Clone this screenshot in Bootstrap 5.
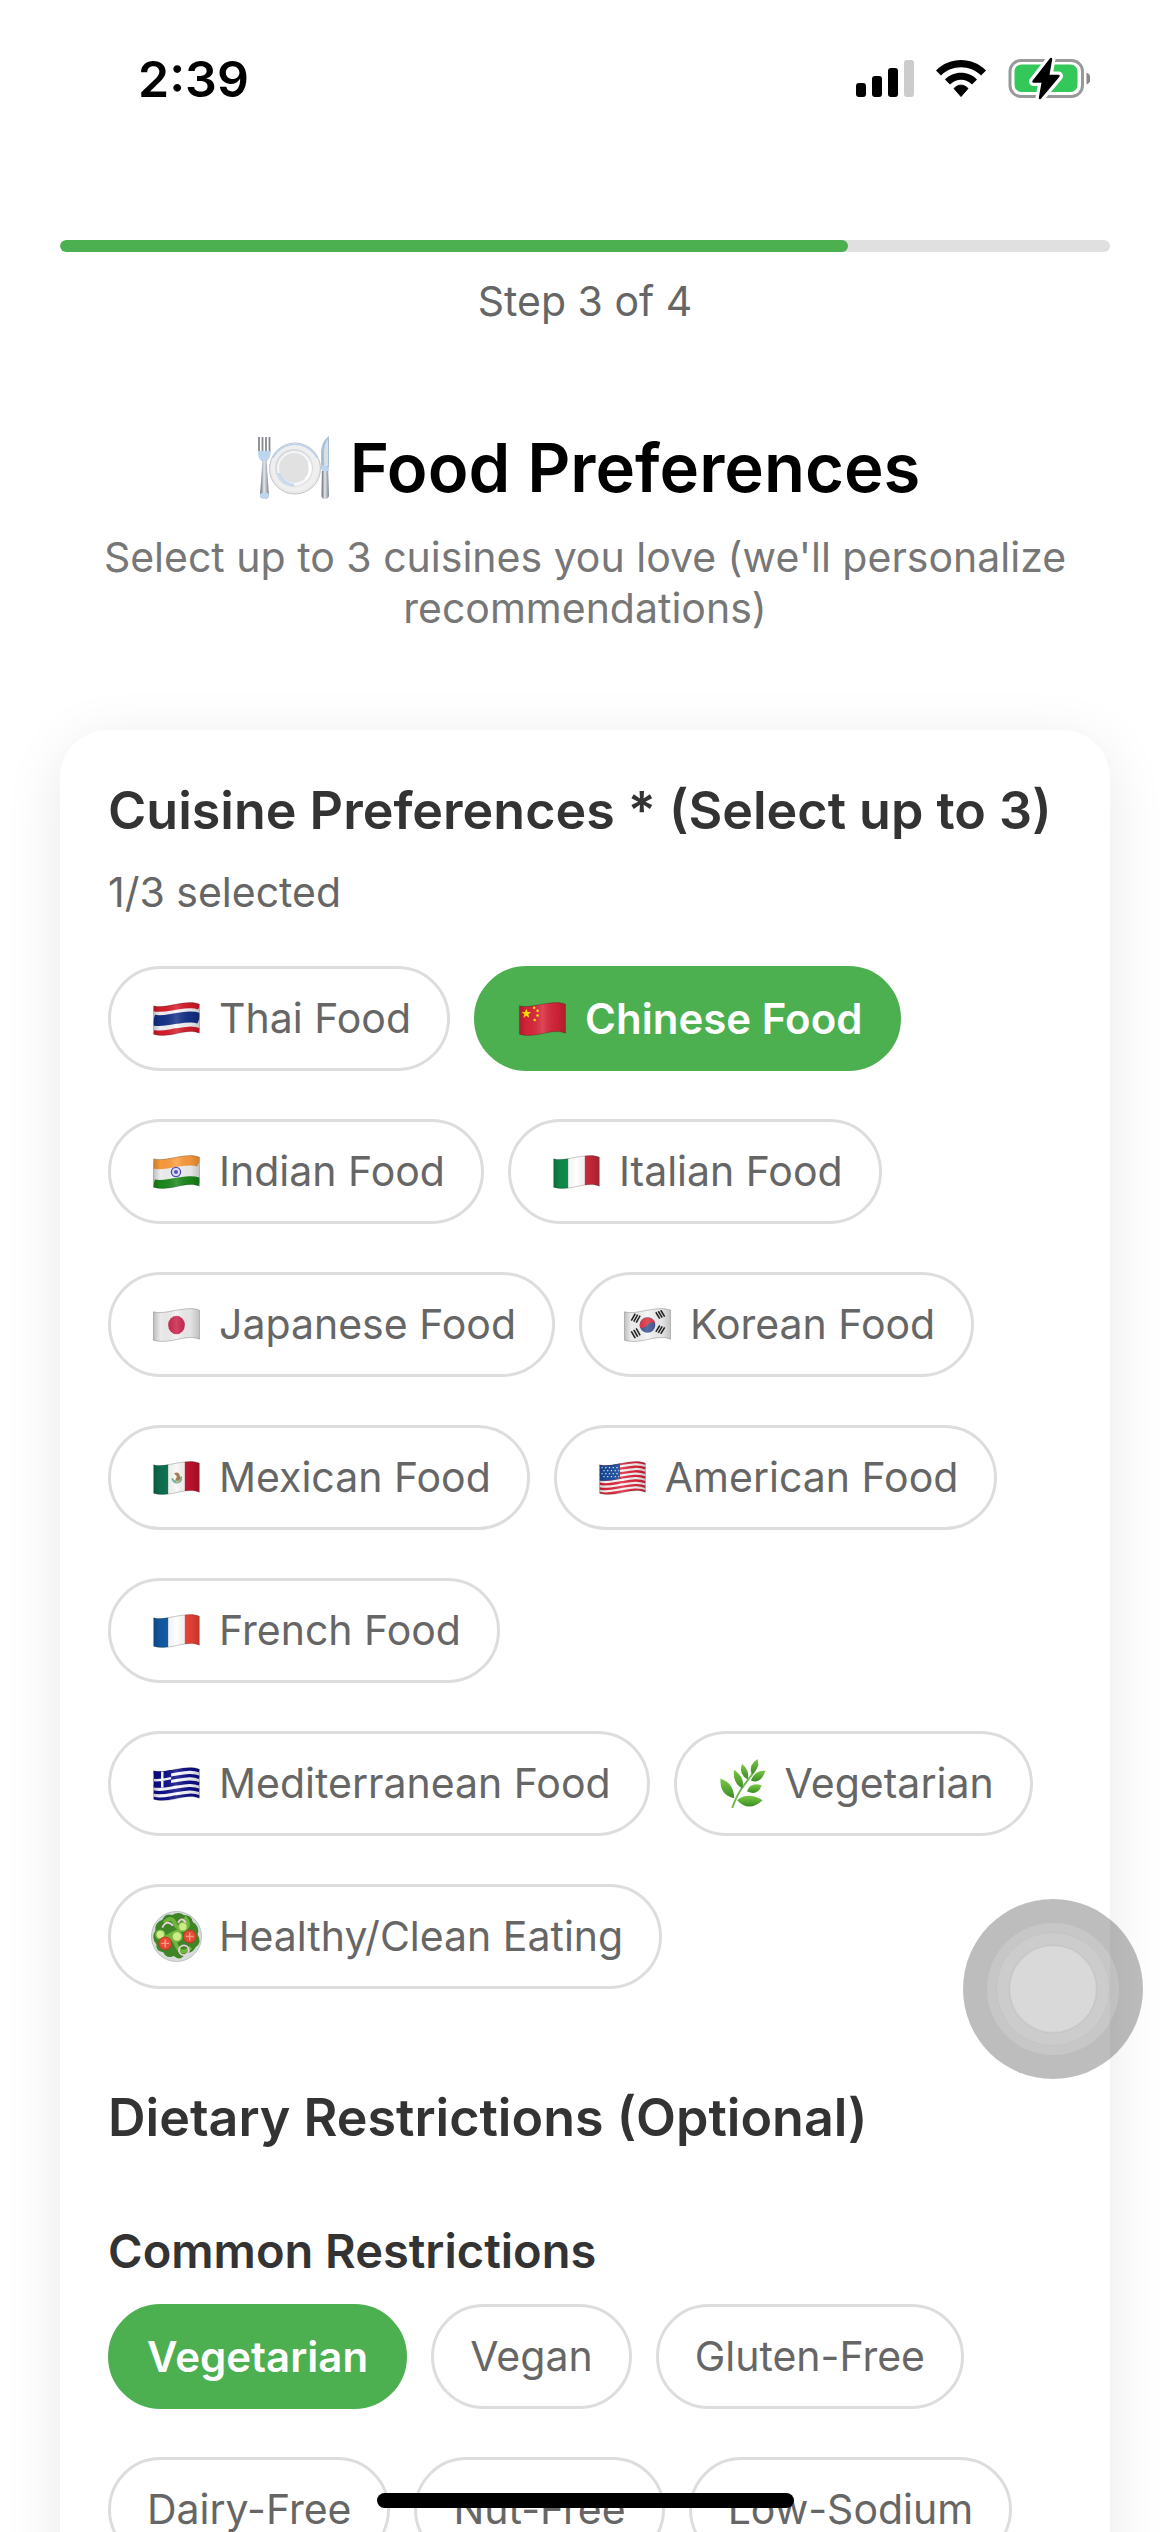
<!DOCTYPE html>
<html lang="en">
<head>
<meta charset="utf-8">
<meta name="viewport" content="width=device-width, initial-scale=1">
<title>Food Preferences</title>
<link href="https://cdn.jsdelivr.net/npm/bootstrap@5.3.0/dist/css/bootstrap.min.css" rel="stylesheet">
<style>
  body { font-family: Inter, "Noto Sans", sans-serif; font-size: 41px; line-height: 50px; color: #666; background: #fff; }
  .status-bar { height: 141px; padding: 16px 80px 0 138px; color: #000; }
  .clock { font-size: 50px; line-height: 60px; font-weight: 600; }
  .page-body { padding: 99px 60px 0; }
  .step-progress { height: 12px; border-radius: 6px; background: #e0e0e0; --bs-progress-bar-bg: #4caf50; }
  .step-progress .progress-bar { border-radius: 6px; }
  .step-text { margin: 24px 0 98px; }
  .page-title { font-size: 67px; line-height: 88px; font-weight: 600; color: #000; gap: 10px; margin-bottom: 20px; }
  .subtitle { line-height: 51px; color: #777; margin-bottom: 96px; }
  .pref-card { border-radius: 48px; padding: 48px; box-shadow: 0 12px 60px rgba(0,0,0,.09); }
  .section-title { font-size: 52px; line-height: 65px; font-weight: 600; color: #333; margin: 0; }
  .group-title { font-size: 47px; line-height: 59px; font-weight: 600; color: #333; margin: 71px 0 24px; }
  .count { line-height: 51px; margin: 24px 0 48px; }
  .chips { display: flex; flex-wrap: wrap; gap: 48px 24px; }
  .cuisines { margin-bottom: 96px; }
  .chip { --bs-btn-font-size: 41px; --bs-btn-line-height: 51px; --bs-btn-padding-x: 36px; --bs-btn-padding-y: 24px;
    --bs-btn-border-width: 3px; --bs-btn-border-radius: 54px; --bs-btn-color: #666; --bs-btn-border-color: #ddd; --bs-btn-bg: #fff;
    --bs-btn-active-bg: #4caf50; --bs-btn-active-color: #fff; --bs-btn-active-border-color: #4caf50;
    display: flex; align-items: center; gap: 14px; white-space: nowrap; line-height: 51px; }
  .chip.active { --bs-btn-font-size: 42px; font-weight: 600; }
  .chip svg { width: 58px; height: 51px; flex: none; }
  .assist { position: fixed; right: 27px; top: 1899px; width: 180px; height: 180px; }
  .home-bar { position: fixed; left: 50%; bottom: 24px; width: 417px; height: 15px; margin-left: -208px; border-radius: 8px; background: #000; }
</style>
</head>
<body>
<svg width="0" height="0" class="position-absolute" aria-hidden="true">
  <defs>
    <clipPath id="wave"><path d="M6 13C13 15 20 13 29 11.500S46 8.500 53 11.500V41C46 38 38 39.500 29 41.500S13 44 6 42Z"/></clipPath>
    <linearGradient id="sheen"><stop offset="0" stop-color="#000" stop-opacity=".22"/><stop offset=".15" stop-color="#000" stop-opacity=".03"/><stop offset=".5" stop-color="#fff" stop-opacity=".15"/><stop offset=".8" stop-color="#000" stop-opacity=".06"/><stop offset="1" stop-color="#000" stop-opacity=".2"/></linearGradient>
    <g id="shade"><path d="M6 13C13 15 20 13 29 11.500S46 8.500 53 11.500V41C46 38 38 39.500 29 41.500S13 44 6 42Z" fill="url(#sheen)" stroke="#000" stroke-opacity=".22"/></g>
    <path id="ripple" d="M6 0C13 2 20 0 29-1.500S46-4.500 53-1.500" fill="none"/>
    <linearGradient id="metal"><stop stop-color="#5f6368"/><stop offset=".45" stop-color="#e4e8ee"/><stop offset="1" stop-color="#77818c"/></linearGradient>
    <linearGradient id="leaf" x2="0" y2="1"><stop stop-color="#79c943"/><stop offset="1" stop-color="#3b8c25"/></linearGradient>
  </defs>
</svg>

<div class="position-relative vh-100 overflow-hidden">
  <header class="status-bar d-flex justify-content-between align-items-center">
    <div class="clock">2:39</div>
    <svg width="240" height="50" viewBox="0 0 240 50" role="img" aria-label="Signal, Wi-Fi, battery charging">
      <g transform="translate(-850 -53)">
        <rect x="856" y="82" width="10" height="14" rx="3"/><rect x="872" y="75" width="10" height="21" rx="3"/><rect x="888" y="67" width="10" height="29" rx="3"/><rect x="904" y="59" width="10" height="37" rx="3" fill="#ccc"/>
        <path d="M936 69.500C949.500 55.500 972.500 55.500 986 69.500L981 74.500C970.500 63.500 951.500 63.500 941 74.500Z"/>
        <path d="M945 78.500C953 69.500 969 69.500 977 78.500L972 83.500C966 77 956 77 950 83.500Z"/>
        <path d="M954 87.500C958 83 964 83 968 87.500L961 95.500Z" stroke="#000" stroke-linejoin="round"/>
        <rect x="1010" y="59.500" width="72.500" height="36" rx="11" fill="none" stroke="#999" stroke-width="3"/>
        <rect x="1014.500" y="63.500" width="63" height="27.500" rx="7" fill="#34c759"/>
        <path d="M1086.500 71.500Q1090.500 73 1090.500 77.500T1086.500 83.500Z" fill="#888"/>
        <path d="M1051 58L1033.500 80.500H1043L1040 97L1058.500 75H1048Z" stroke="#fff" stroke-width="9" stroke-linejoin="round"/>
        <path d="M1051 58L1033.500 80.500H1043L1040 97L1058.500 75H1048Z" stroke="#000" stroke-width="2.500" stroke-linejoin="round"/>
      </g>
    </svg>
  </header>

  <main class="page-body">
    <div class="progress step-progress" role="progressbar" aria-label="Step 3 of 4" aria-valuenow="75" aria-valuemin="0" aria-valuemax="100"><div class="progress-bar" style="width:75%"></div></div>
    <p class="step-text text-center">Step 3 of 4</p>
    <h1 class="page-title d-flex justify-content-center align-items-center">
      <svg width="90" height="76" viewBox="0 0 90 76" aria-hidden="true">
        <circle cx="45" cy="38.500" r="25.500" fill="#e9e9ea" stroke="#c2c5ca"/><circle cx="45" cy="37.500" r="24" fill="#efeff0"/><path d="M23 28A24.500 24.500 0 0 1 67 28" fill="none" stroke="#b9d4f1" stroke-width="1.500"/>
        <circle cx="44" cy="38" r="19" fill="#d8dadd"/><circle cx="44.500" cy="38.500" r="17.500" fill="#f4f6f9"/><circle cx="44" cy="38" r="15" fill="#e1e1e1"/><path d="M29 43A16 16 0 0 0 44 55" fill="none" stroke="#c4daf1" stroke-width="2.500"/><path d="M59 33A16 16 0 0 1 56 49" fill="none" stroke="#fff" stroke-width="2.500"/>
        <path d="M9 7V23M12.500 7V23M16 7V23M19.500 7V23" stroke="#85888d" stroke-width="1.800"/>
        <path d="M8 21H20.500Q21 28 17 31H11.500Q7.500 28 8 21Z" fill="#bcd6f0"/><path d="M12.500 30H16.500L19 66Q18 69 14.500 69T10 66Z" fill="url(#metal)"/><rect x="10" y="63" width="9" height="5" rx="2" fill="#bcd6f0"/>
        <path d="M71 39V21Q72 11 79 6V39Z" fill="#a9bfd4"/><path d="M74 36V20Q75 12 78 9V36Z" fill="#d5e0eb"/><path d="M72 36H78L79 66Q78 69 75 69T71.500 66Z" fill="url(#metal)"/><path d="M71 35L79 37V41H72Z" fill="#bcd6f0"/>
      </svg>
      <span>Food Preferences</span>
    </h1>
    <p class="subtitle text-center">Select up to 3 cuisines you love (we'll personalize recommendations)</p>

    <section class="pref-card bg-white">
      <h2 class="section-title">Cuisine Preferences * (Select up to 3)</h2>
      <p class="count">1/3 selected</p>
      <div class="chips cuisines">
        <button type="button" class="btn chip" aria-pressed="false"><svg viewBox="0 0 58 52" aria-hidden="true"><g clip-path="url(#wave)"><path fill="#f4f5f8" d="M0 0H58V52H0z"/><use href="#ripple" y="15" stroke="#d91c2a" stroke-width="7"/><use href="#ripple" y="27.500" stroke="#15318a" stroke-width="11"/><use href="#ripple" y="41" stroke="#d91c2a" stroke-width="7"/></g><use href="#shade"/></svg>Thai Food</button>
        <button type="button" class="btn chip active" aria-pressed="true"><svg viewBox="0 0 58 52" aria-hidden="true"><g clip-path="url(#wave)"><path fill="#d9253a" d="M0 0H58V52H0z"/><path fill="#ffe600" d="M13 16l1.300 3.300 3.700.1-2.900 2.300 1 3.500-3.100-2-3.100 2 1-3.500L8 19.400l3.700-.1z"/><g fill="#ffe600"><circle cx="21" cy="15" r="1.300"/><circle cx="24.500" cy="18" r="1.300"/><circle cx="24.500" cy="23" r="1.300"/><circle cx="21.500" cy="27.500" r="1.300"/></g></g><use href="#shade"/></svg>Chinese Food</button>
        <button type="button" class="btn chip" aria-pressed="false"><svg viewBox="0 0 58 52" aria-hidden="true"><g clip-path="url(#wave)"><path fill="#f4f4f4" d="M0 0H58V52H0z"/><use href="#ripple" y="17" stroke="#ff9d3c" stroke-width="12"/><use href="#ripple" y="39.500" stroke="#1b8a1b" stroke-width="11"/><circle cx="29" cy="26.500" r="4.700" fill="#dcdcf8" stroke="#3a35b0" stroke-width="1.300"/><circle cx="29" cy="26.500" r="2" fill="#3a35b0"/></g><use href="#shade"/></svg>Indian Food</button>
        <button type="button" class="btn chip" aria-pressed="false"><svg viewBox="0 0 58 52" aria-hidden="true"><g clip-path="url(#wave)"><path fill="#fff" d="M0 0H58V52H0z"/><path fill="#0f8b4a" d="M6 0H21V52H6z"/><path fill="#cd2a3a" d="M38 0H53V52H38z"/></g><use href="#shade"/></svg>Italian Food</button>
        <button type="button" class="btn chip" aria-pressed="false"><svg viewBox="0 0 58 52" aria-hidden="true"><g clip-path="url(#wave)"><path fill="#f1f1f1" d="M0 0H58V52H0z"/><ellipse cx="29.500" cy="26.500" rx="8.500" ry="9.500" fill="#c9234b"/></g><use href="#shade"/></svg>Japanese Food</button>
        <button type="button" class="btn chip" aria-pressed="false"><svg viewBox="0 0 58 52" aria-hidden="true"><g clip-path="url(#wave)"><path fill="#f4f4f4" d="M0 0H58V52H0z"/><circle cx="29.500" cy="26.500" r="8" fill="#3d5494"/><path d="M21.700 29A8 8 0 1 1 37.500 25Q34 22 29.500 26.500T21.700 29Z" fill="#d8323f"/><g stroke="#222" stroke-width="1.600"><path d="M13 22l4-7M15.500 23l4-7M18 24l4-7M38 33.500l4-6.500M40.500 34.500l4-6.500M43 35.500l4-6.500M38 13.500l4 6.500M40.500 12.500l4 6.500M43 11.500l4 6.500M13 33l4 7M15.500 31.500l4 7M18 30l4 7"/></g></g><use href="#shade"/></svg>Korean Food</button>
        <button type="button" class="btn chip" aria-pressed="false"><svg viewBox="0 0 58 52" aria-hidden="true"><g clip-path="url(#wave)"><path fill="#f8f8f6" d="M0 0H58V52H0z"/><path fill="#0c7050" d="M6 0H21V52H6z"/><path fill="#c4122f" d="M38 0H53V52H38z"/><path d="M25 27Q27 32 31 31T34 25" fill="none" stroke="#83aa78" stroke-width="2"/><path d="M27 22Q32 19 33 25T28 29L30 25Z" fill="#9a6b3c"/><circle cx="28" cy="30" r="1.300" fill="#4db3c4"/></g><use href="#shade"/></svg>Mexican Food</button>
        <button type="button" class="btn chip" aria-pressed="false"><svg viewBox="0 0 58 52" aria-hidden="true"><g clip-path="url(#wave)"><path fill="#f8f8f8" d="M0 0H58V52H0z"/><g stroke="#e0253c" stroke-width="2.400"><use href="#ripple" y="13.500"/><use href="#ripple" y="18.200"/><use href="#ripple" y="22.900"/><use href="#ripple" y="27.600"/><use href="#ripple" y="32.300"/><use href="#ripple" y="37"/><use href="#ripple" y="41.700"/></g><path d="M6 0H27V27Q16 30 6 29Z" fill="#1c4f9e"/><path d="M8 16H26M10 19H26M8 22H26M10 25H26" stroke="#dce8fa" stroke-width="1.300" stroke-dasharray="1.300 2.500"/></g><use href="#shade"/></svg>American Food</button>
        <button type="button" class="btn chip" aria-pressed="false"><svg viewBox="0 0 58 52" aria-hidden="true"><g clip-path="url(#wave)"><path fill="#fff" d="M0 0H58V52H0z"/><path fill="#1059a5" d="M6 0H21V52H6z"/><path fill="#f04337" d="M38 0H53V52H38z"/></g><use href="#shade"/></svg>French Food</button>
        <button type="button" class="btn chip" aria-pressed="false"><svg viewBox="0 0 58 52" aria-hidden="true"><g clip-path="url(#wave)"><path fill="#fafafe" d="M0 0H58V52H0z"/><g stroke="#0d0f8a" stroke-width="3.500"><use href="#ripple" y="14.500"/><use href="#ripple" y="21.200"/><use href="#ripple" y="27.900"/><use href="#ripple" y="34.600"/><use href="#ripple" y="41.300"/></g><path d="M6 0H24V28Q15 30.500 6 30Z" fill="#0d0f8a"/><path d="M15 13V30M6 22.500Q15 23 24 20.500" fill="none" stroke="#fff" stroke-width="2.500"/></g><use href="#shade"/></svg>Mediterranean Food</button>
        <button type="button" class="btn chip" aria-pressed="false"><svg viewBox="0 0 58 52" aria-hidden="true"><path d="M19 51Q24 36 33 25T45 6" fill="none" stroke="#74b956" stroke-width="2"/><g fill="url(#leaf)"><path d="M45 1Q35 7 39 17Q47 11 45 1Z"/><path d="M29 6Q25 16 35 22Q37 12 29 6Z"/><path d="M53 13Q42 12 38 23Q48 27 53 13Z"/><path d="M21 12Q19 25 29 31Q33 21 21 12Z"/><path d="M34 34Q38 24 49 28Q45 39 34 34Z"/><path d="M7 21Q6 38 21 41Q21 26 7 21Z"/><path d="M24 43Q35 34 50 43Q36 56 24 43Z"/></g></svg>Vegetarian</button>
        <button type="button" class="btn chip" aria-pressed="false"><svg viewBox="0 0 58 52" aria-hidden="true"><circle cx="29.500" cy="26" r="25.500" fill="#d7dcda" stroke="#b9c1bd"/><path d="M15 9Q18 2 25 4Q32 0 37 4Q45 4 46 11Q54 16 51 24Q56 32 49 37Q46 43 39 43Q33 52 27 46Q19 49 16 42Q8 41 9 34Q3 27 8 20Q7 12 15 9Z" fill="#3f8427"/><path d="M17 12Q25 4 28 13T39 8Q45 16 35 19T13 31Q24 21 29 34T44 37" fill="none" stroke="#6fb53d" stroke-width="4"/><g fill="#cdec87" stroke="#7db842" stroke-width="1.500"><circle cx="13" cy="24" r="4.500"/><circle cx="30" cy="26" r="5"/><circle cx="36" cy="16" r="4.500"/></g><g fill="#e34b36" stroke="#c23425"><circle cx="18" cy="33" r="6.500"/><circle cx="43" cy="26" r="6.500"/></g><path d="M14 33h8M18 29v8M39 26h8M43 22v8" stroke="#f59b80" stroke-width="1.500"/><g fill="none" stroke="#eed2df" stroke-width="1.800"><path d="M15 17Q19 8 26 15M31 12Q35 5 39 12"/><circle cx="37" cy="40" r="5"/></g></svg>Healthy/Clean Eating</button>
      </div>

      <h2 class="section-title">Dietary Restrictions (Optional)</h2>
      <h3 class="group-title">Common Restrictions</h3>
      <div class="chips">
        <button type="button" class="btn chip active" aria-pressed="true">Vegetarian</button>
        <button type="button" class="btn chip" aria-pressed="false">Vegan</button>
        <button type="button" class="btn chip" aria-pressed="false">Gluten-Free</button>
        <button type="button" class="btn chip" aria-pressed="false">Dairy-Free</button>
        <button type="button" class="btn chip" aria-pressed="false">Nut-Free</button>
        <button type="button" class="btn chip" aria-pressed="false">Low-Sodium</button>
      </div>
    </section>
  </main>

  <svg class="assist" viewBox="0 0 180 180" aria-hidden="true"><circle cx="90" cy="90" r="90" fill="#000" fill-opacity=".26"/><circle cx="90" cy="90" r="66" fill="#fff" fill-opacity=".14"/><circle cx="90" cy="90" r="56.500" fill="#fff" fill-opacity=".09" stroke="#000" stroke-opacity=".03"/><circle cx="90" cy="90" r="43.500" fill="#fff" fill-opacity=".26" stroke="#000" stroke-opacity=".04" stroke-width="2"/></svg>
  <div class="home-bar"></div>
</div>
<script src="https://cdn.jsdelivr.net/npm/bootstrap@5.3.0/dist/js/bootstrap.bundle.min.js"></script>
</body>
</html>
